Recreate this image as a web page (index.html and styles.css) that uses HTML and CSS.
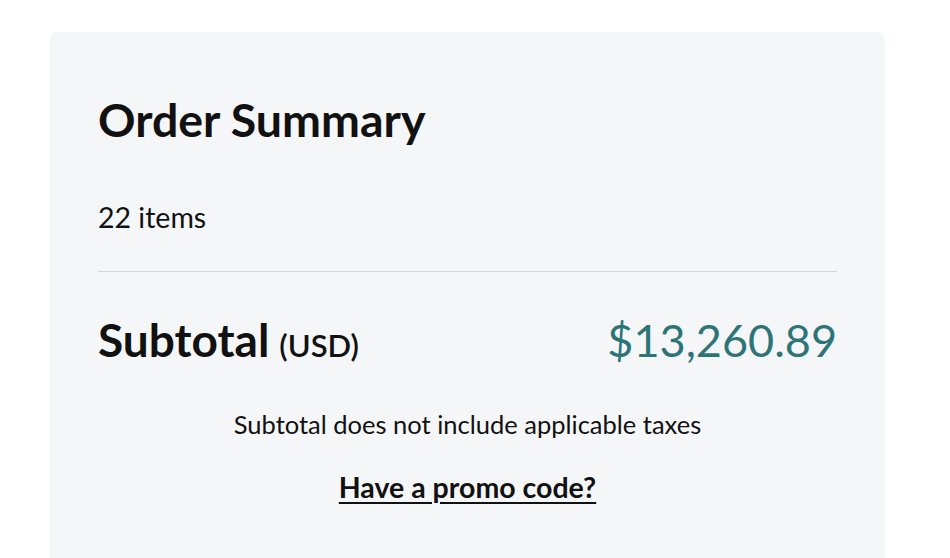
FILE: index.html
```html
<!DOCTYPE html>
<html lang="en">
<head>
<meta charset="utf-8">
<title>Order Summary</title>
<link rel="stylesheet" href="styles.css">
</head>
<body>
<section class="card">
  <h2 class="title">Order Summary</h2>
  <p class="count">22 items</p>
  <hr class="divider">
  <div class="subtotal">
    <div class="label"><span class="label-main">Subtotal</span><span class="label-cur">(USD)</span></div>
    <div class="amount">$13,260.89</div>
  </div>
  <p class="note">Subtotal does not include applicable taxes</p>
  <p class="promo"><a href="#" class="promo-link">Have a promo code?</a></p>
</section>
</body>
</html>
```
FILE: styles.css
```css
html, body {
  margin: 0;
  padding: 0;
  background: #ffffff;
}
body {
  font-family: "Lato", "Liberation Sans", sans-serif;
  color: #111111;
  padding: 32px 65px 0 50px;
  height: 558px;
  box-sizing: border-box;
  overflow: hidden;
  display: flex;
  flex-direction: column;
}
.card {
  flex: 1;
  background: #f5f6f8;
  border-radius: 8px 8px 0 0;
  padding: 60px 48px 0 48px;
  box-sizing: border-box;
}
.title {
  margin: 0;
  font-size: 46.5px;
  line-height: 1.2;
  font-weight: 700;
}
.count {
  margin: 52px 0 0 0;
  font-size: 28.5px;
  line-height: 1.2;
}
.divider {
  margin: 37px 0 0 0;
  border: 0;
  border-top: 1px solid #d4d5d8;
  height: 0;
}
.subtotal {
  margin-top: 40px;
  display: flex;
  justify-content: space-between;
  align-items: baseline;
}
.label-main {
  font-size: 46px;
  line-height: 1.2;
  font-weight: 700;
}
.label-cur {
  margin-left: 10px;
  font-size: 31px;
  font-weight: 600;
}
.amount {
  font-size: 45px;
  line-height: 1.2;
  color: #2d7479;
}
.note {
  margin: 42px 0 0 0;
  text-align: center;
  font-size: 25.5px;
  line-height: 1.2;
}
.promo {
  margin: 30px 0 0 0;
  text-align: center;
  font-size: 28.5px;
  line-height: 1.2;
}
.promo-link {
  color: #111111;
  font-weight: 700;
  text-decoration: underline;
  text-underline-offset: 4px;
  text-decoration-thickness: 2px;
}
```
